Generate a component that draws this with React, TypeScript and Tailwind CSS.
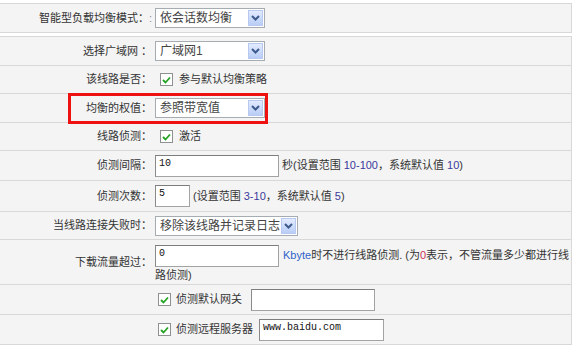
import type { ReactNode } from "react";

function Chevron() {
  return (
    <svg width="9" height="6" viewBox="0 0 9 6">
      <path d="M1 1 L4.5 4.5 L8 1" stroke="#3d5a8c" strokeWidth="2" fill="none" />
    </svg>
  );
}

function Select({ value, w }: { value: string; w: string }) {
  return (
    <div className={`flex h-[20px] items-center justify-between border border-[#a5acb2] bg-white pr-[1px] ${w}`}>
      <span className="pl-[4px] text-[12px] text-[#444]">{value}</span>
      <span className="flex h-[16px] w-[15px] items-center justify-center border border-[#b7c9f1] bg-gradient-to-b from-[#e3ebff] to-[#b9cdf7]">
        <Chevron />
      </span>
    </div>
  );
}

function Check() {
  return (
    <span className="flex h-[13px] w-[13px] shrink-0 items-center justify-center border border-[#8f9091] bg-white">
      <svg width="9" height="8" viewBox="0 0 9 8">
        <path d="M1 4 L3.5 6.5 L8 1.5" stroke="#22a322" strokeWidth="1.8" fill="none" />
      </svg>
    </span>
  );
}

function Field({ value, w }: { value?: string; w: string }) {
  return (
    <div
      className={`h-[22px] shrink-0 border border-[#a3a3a3] border-t-[#7d7d7d] border-l-[#8a8a8a] bg-white px-[3px] font-['Liberation_Mono',monospace] text-[10px] leading-[16px] text-[#111] ${w}`}
    >
      {value}
    </div>
  );
}

function Row({ label, h, children }: { label?: ReactNode; h: string; children: ReactNode }) {
  return (
    <div className={`relative flex items-center border-b border-[#d8d8d8] ${h}`}>
      <div className="w-[152px] shrink-0 text-right text-[#333]">{label}</div>
      <div className="ml-[3px] flex flex-1 items-center">{children}</div>
    </div>
  );
}

const num = "text-[#3a3a9c]";

export default function App() {
  return (
    <div className="h-[352px] w-[574px] bg-white pt-[3px] font-['Liberation_Sans','Noto_Sans_CJK_SC',sans-serif] text-[11px]">
      <div className="w-[572px] border-y border-r border-[#d8d8d8] bg-[#f4f4f4]">
        <div className="flex h-[28px] items-center">
          <div className="w-[152px] shrink-0 text-right text-[#333]">
            智能型负载均衡模式：<span className="text-[#8a8fa8]">:</span>
          </div>
          <div className="ml-[3px]">
            <Select value="依会话数均衡" w="w-[110px]" />
          </div>
        </div>
      </div>

      <div className="mt-[3px] w-[572px] border-t border-r border-[#d8d8d8] bg-[#f4f4f4]">
        <Row label="选择广域网 ：" h="h-[29px]">
          <Select value="广域网1" w="w-[110px]" />
        </Row>
        <Row label="该线路是否：" h="h-[28px]">
          <span className="ml-[5px]">
            <Check />
          </span>
          <span className="ml-[6px] text-[#333]">参与默认均衡策略</span>
        </Row>
        <Row label="均衡的权值：" h="h-[29px]">
          <Select value="参照带宽值" w="w-[110px]" />
          <div className="pointer-events-none absolute -top-[1px] left-[68px] h-[31px] w-[200px] border-[3px] border-[#ee1111]" />
        </Row>
        <Row label="线路侦测：" h="h-[28px]">
          <span className="ml-[5px]">
            <Check />
          </span>
          <span className="ml-[6px] text-[#333]">激活</span>
        </Row>
        <Row label="侦测间隔：" h="h-[30px]">
          <Field value="10" w="w-[124px]" />
          <span className="ml-[3px] whitespace-nowrap text-[#333]">
            秒(设置范围 <span className={num}>10-100</span>，系统默认值 <span className={num}>10</span>)
          </span>
        </Row>
        <Row label="侦测次数：" h="h-[31px]">
          <Field value="5" w="w-[35px]" />
          <span className="ml-[3px] whitespace-nowrap text-[#333]">
            (设置范围 <span className={num}>3-10</span>，系统默认值 <span className={num}>5</span>)
          </span>
        </Row>
        <Row label="当线路连接失败时：" h="h-[28px]">
          <Select value="移除该线路并记录日志" w="w-[143px]" />
        </Row>
        <Row label="下载流量超过：" h="h-[45px]">
          <div className="flex flex-col pt-[2px]">
            <div className="flex items-center">
              <Field value="0" w="w-[124px]" />
              <span className="ml-[4px] whitespace-nowrap text-[#333]">
                <span className="text-[#2f62c8]">Kbyte</span>时不进行线路侦测. (为<span className="text-[#d0305a]">0</span>表示，不管流量多少都进行线
              </span>
            </div>
            <div className="mt-[1px] leading-[14px] text-[#333]">路侦测)</div>
          </div>
        </Row>
        <Row h="h-[30px]">
          <span className="ml-[3px]">
            <Check />
          </span>
          <span className="ml-[5px] text-[#333]">侦测默认网关</span>
          <span className="ml-[9px]">
            <Field w="w-[124px]" />
          </span>
        </Row>
        <Row h="h-[30px]">
          <span className="ml-[3px]">
            <Check />
          </span>
          <span className="ml-[5px] text-[#333]">侦测远程服务器</span>
          <span className="ml-[6px]">
            <Field value="www.baidu.com" w="w-[125px]" />
          </span>
        </Row>
      </div>
    </div>
  );
}
